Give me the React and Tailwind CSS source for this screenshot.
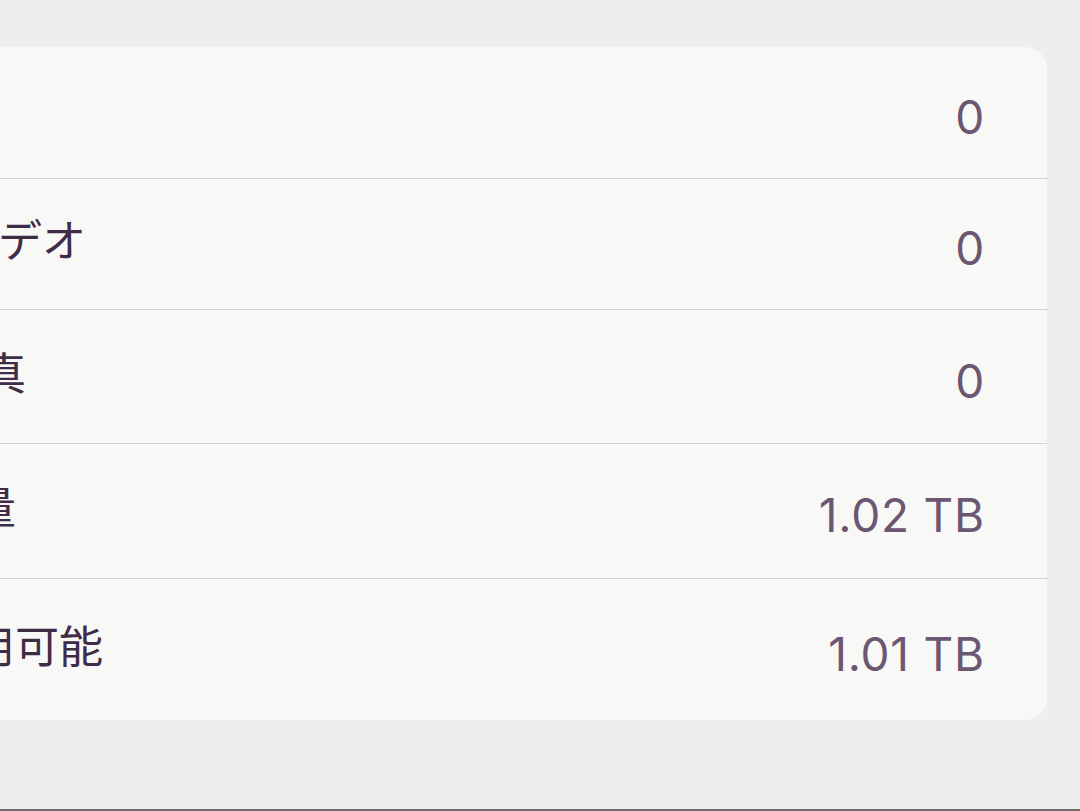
import React from 'react';

const rows = [
    { label: '曲', value: '0', h: 'h-[132px]', shift: 'ml-[-120px]' },
    { label: 'ビデオ', value: '0', h: 'h-[131px]', shift: 'ml-[-46px]' },
    { label: '写真', value: '0', h: 'h-[134px]', shift: 'ml-[-62px]' },
    { label: '容量', value: '1.02 TB', h: 'h-[135px]', shift: 'ml-[-72px]' },
    { label: '使用可能', value: '1.01 TB', h: 'h-[141px]', shift: 'ml-[-73px]' },
];

const App = () => {
    return (
        <div className="w-[1080px] h-[811px] bg-[#eeeeec] overflow-hidden flex flex-col">
            <div className="pt-[47px] flex-1">
                {/* カード */}
                <div className="w-[1047px] bg-[#f8f8f6] rounded-r-[22px] overflow-hidden">
                    {rows.map((row, i) => (
                        <div
                            key={row.label}
                            className={`${row.h} flex items-center justify-between pr-[62px] ${i < rows.length - 1 ? 'border-b border-[#d8d1d4]' : ''}`}
                        >
                            <span
                                className={`${row.shift} text-[44px] leading-none text-[#3f2c46] whitespace-nowrap -translate-y-[6px]`}
                                style={{ fontFamily: '"Noto Sans CJK JP", "Noto Sans", sans-serif' }}
                            >
                                {row.label}
                            </span>
                            <span
                                className="text-[46px] leading-none text-[#6c5772] tracking-[0.8px] translate-y-[4px]"
                                style={{ fontFamily: 'Inter, "Noto Sans", sans-serif' }}
                            >
                                {row.value}
                            </span>
                        </div>
                    ))}
                </div>
            </div>
            <div className="h-[2px] bg-[#6f6f6f]" />
        </div>
    );
};

export default App;
